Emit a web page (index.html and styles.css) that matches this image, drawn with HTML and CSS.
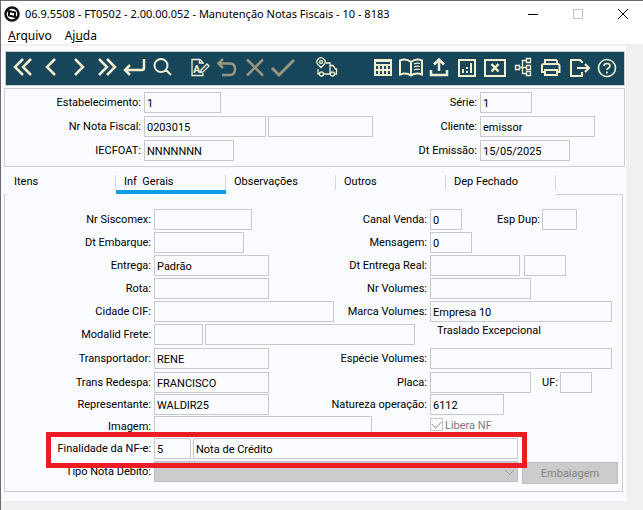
FILE: index.html
```html
<!DOCTYPE html>
<html lang="pt-BR">
  <head>
    <meta charset="UTF-8" />
    <meta name="viewport" content="width=device-width, initial-scale=1.0" />
    <title>Manutenção Notas Fiscais</title>
    <link rel="stylesheet" href="styles.css">
  </head>

  <body>
    <header class="titlebar">
      <svg class="logo" viewBox="0 0 16 16">
        <circle cx="8" cy="8" r="6.5" fill="none" stroke="#111" stroke-width="2.500" />
        <path d="M3 4.500L11 6.500V10.500M13 11.500L5 9.500V5.500" fill="none" stroke="#111" stroke-width="2" />
      </svg>
      <h1>06.9.5508 - FT0502 - 2.00.00.052 - Manutenção Notas Fiscais - 10 - 8183</h1>
      <button class="win" aria-label="Minimizar"><svg viewBox="0 0 12 12"><path d="M1 6.500H11" /></svg></button>
      <button class="win off" aria-label="Maximizar"><svg viewBox="0 0 12 12"><path d="M1.500 1.500H10.500V10.500H1.500Z" /></svg></button>
      <button class="win" aria-label="Fechar"><svg viewBox="0 0 12 12"><path d="M1 1L11 11M11 1L1 11" /></svg></button>
    </header>
    <nav class="menu">
      <a href="#"><u>A</u>rquivo</a>
      <a href="#">Aj<u>u</u>da</a>
    </nav>

    <main>
      <div class="toolbar">
        <button aria-label="Primeiro"><svg viewBox="0 0 28 28"><path d="M14 6L6 14L14 22M22 6L14 14L22 22" /></svg></button>
        <button aria-label="Anterior"><svg viewBox="0 0 28 28"><path d="M18 6L10 14L18 22" /></svg></button>
        <button aria-label="Próximo"><svg viewBox="0 0 28 28"><path d="M10 6L18 14L10 22" /></svg></button>
        <button aria-label="Último"><svg viewBox="0 0 28 28"><path d="M6 6L14 14L6 22M14 6L22 14L14 22" /></svg></button>
        <button aria-label="Vá para"><svg viewBox="0 0 28 28"><path d="M23 6V15Q23 17 21 17H4M9 12L4 17L9 22" /></svg></button>
        <button aria-label="Pesquisa"><svg viewBox="0 0 28 28"><path class="thin" d="M18.500 12.500A6.500 6.500 0 1 1 5.500 12.500A6.500 6.500 0 1 1 18.500 12.500M17 17L22 22" /></svg></button>
        <button class="gap-s" aria-label="Modifica"><svg viewBox="0 0 28 28"><path class="fine" d="M18 11V9.500L15 6.500H7V22.500H18V20M14.500 6.500V10H18M16 17L22 11L24 13L18 19L15.500 19.500Z" /><text x="8" y="20">A</text></svg></button>
        <button class="off" disabled aria-label="Desfaz"><svg viewBox="0 0 28 28"><path d="M10 6L5.500 10.500L10 15M6 10.500H17Q22 10.500 22 16Q22 22 17 22H9" /></svg></button>
        <button class="off" disabled aria-label="Cancela"><svg viewBox="0 0 28 28"><path d="M6 6.500L22 22.500M22 6.500L6 22.500" /></svg></button>
        <button class="off" disabled aria-label="Salva"><svg viewBox="0 0 28 28"><path class="bold" d="M3 15L10 22L25 7" /></svg></button>
        <button class="gap-m" aria-label="Transporte"><svg viewBox="0 0 28 28"><path class="fine" d="M8 14.500L5 11.500A4 4 0 1 1 11 11.500ZM5 16V21H6.500M10.500 21H17M13 10H17V21M17 12.500H20L22.500 16H23.500V21H21.500" /><circle class="fine" cx="8" cy="9" r="1.500" /><circle class="fine" cx="8.500" cy="21" r="2" /><circle class="fine" cx="19.500" cy="21" r="2" /></svg></button>
        <button class="gap-l" aria-label="Calendário"><svg viewBox="0 0 28 28"><path class="thin" d="M6 7H22V22H6ZM6 12H22M6 17H22M10 12V22M14 12V22M18 12V22" /><path class="thin" d="M6 8H22" /></svg></button>
        <button aria-label="Consulta"><svg viewBox="0 0 28 28"><path class="thin" d="M14 9Q9 5 3 7.500V21.500Q9 19 14 22.500Q19 19 25 21.500V7.500Q19 5 14 9V22" /><path class="fine" d="M17 11Q20 9.500 23 10.500M17 14Q20 12.500 23 13.500M17 17Q20 15.500 23 16.500" /></svg></button>
        <button aria-label="Exportar"><svg viewBox="0 0 28 28"><path d="M6 17V22H22V17M14 18V7M9 11.500L14 6.500L19 11.500" /></svg></button>
        <button aria-label="Gráfico"><svg viewBox="0 0 28 28"><path class="thin" d="M6 7H22V23H6ZM10 16V20M14 18V20M14 14V16M18 10V20" /></svg></button>
        <button aria-label="Planilha"><svg viewBox="0 0 28 28"><path class="thin" d="M4 7H24V23H4Z" /><path d="M10.500 11L17.500 18.500M17.500 11L10.500 18.500" /></svg></button>
        <button aria-label="Estrutura"><svg viewBox="0 0 28 28"><path class="fine" d="M6.500 12.500H10.500V16.500H6.500ZM17.500 5.500H21.500V9.500H17.500ZM17.500 12.500H21.500V16.500H17.500ZM17.500 18.500H21.500V22.500H17.500ZM10.500 14.500H17.500M17.500 7.500H13.500V20.500H17.500" /></svg></button>
        <button aria-label="Imprime"><svg viewBox="0 0 28 28"><path class="thin" d="M8 11V7H19L20 8V11M8 19H5V13Q5 11 7 11H20.500Q22.500 11 22.500 13V19H20M8 17H20V22H8Z" /></svg></button>
        <button aria-label="Sair"><svg viewBox="0 0 28 28"><path class="thin" d="M17 10V9L15 7H6V23H17V19M12 15H23M20 11L24 15L20 19" /></svg></button>
        <button aria-label="Ajuda"><svg viewBox="0 0 28 28"><circle class="slim" cx="14" cy="15" r="8.500" /><path class="slim" d="M11 13Q11 10.500 14 10.500Q17 10.500 17 13Q17 14 15.500 15Q14 16 14 17M14 18.500V20.500" /></svg></button>
      </div>

      <section class="panel">
        <label for="estab">Estabelecimento:</label>
        <div class="fields"><input id="estab" class="w77" value="1" readonly></div>
        <label for="serie">Série:</label>
        <div class="fields"><input id="serie" class="w52" value="1" readonly></div>

        <label for="nota">Nr Nota Fiscal:</label>
        <div class="fields"><input id="nota" class="w122" value="0203015" readonly><input class="w105" aria-label="Complemento" readonly></div>
        <label for="cliente">Cliente:</label>
        <div class="fields"><input id="cliente" class="w115" value="emissor" readonly></div>

        <label for="iecfoat">IECFOAT:</label>
        <div class="fields"><input id="iecfoat" class="w90" value="NNNNNNN" readonly></div>
        <label for="emissao">Dt Emissão:</label>
        <div class="fields"><input id="emissao" class="w90" value="15/05/2025" readonly></div>
      </section>

      <div class="tabs">
        <button><span>Itens</span></button>
        <button class="active"><span>Inf&nbsp; Gerais</span></button>
        <button><span>Observações</span></button>
        <button><span>Outros</span></button>
        <button><span>Dep Fechado</span></button>
      </div>

      <section class="pane">
        <label for="siscomex">Nr Siscomex:</label>
        <div class="fields"><input id="siscomex" class="w98" readonly></div>
        <label for="canal">Canal Venda:</label>
        <div class="fields"><input id="canal" class="w32" value="0" readonly><label for="espdup" class="esp">Esp Dup:</label><input id="espdup" class="w35" readonly></div>

        <label for="embarque">Dt Embarque:</label>
        <div class="fields"><input id="embarque" class="w90" readonly></div>
        <label for="mensagem">Mensagem:</label>
        <div class="fields"><input id="mensagem" class="w42" value="0" readonly></div>

        <label for="entrega">Entrega:</label>
        <div class="fields"><input id="entrega" class="w115" value="Padrão" readonly></div>
        <label for="real">Dt Entrega Real:</label>
        <div class="fields loose"><input id="real" class="w90" readonly><input class="w42" aria-label="Hora" readonly></div>

        <label for="rota">Rota:</label>
        <div class="fields"><input id="rota" class="w115" readonly></div>
        <label for="nrvol">Nr Volumes:</label>
        <div class="fields"><input id="nrvol" class="w101" readonly></div>

        <label for="cidade">Cidade CIF:</label>
        <div class="fields"><input id="cidade" class="w180" readonly></div>
        <label for="marca">Marca Volumes:</label>
        <div class="fields"><input id="marca" class="full" value="Empresa 10" readonly></div>

        <label for="frete">Modalid Frete:</label>
        <div class="fields span2"><input id="frete" class="w49" readonly><input class="w210" aria-label="Descrição do frete" readonly></div>
        <p class="note">Traslado Excepcional</p>

        <label for="transp">Transportador:</label>
        <div class="fields"><input id="transp" class="w115" value="RENE" readonly></div>
        <label for="especie">Espécie Volumes:</label>
        <div class="fields"><input id="especie" class="full" readonly></div>

        <label for="redespa">Trans Redespa:</label>
        <div class="fields"><input id="redespa" class="w115" value="FRANCISCO" readonly></div>
        <label for="placa">Placa:</label>
        <div class="fields"><input id="placa" class="w101" readonly><label for="uf" class="uf">UF:</label><input id="uf" class="w32" readonly></div>

        <label for="repres">Representante:</label>
        <div class="fields"><input id="repres" class="w115" value="WALDIR25" readonly></div>
        <label for="natureza">Natureza operação:</label>
        <div class="fields"><input id="natureza" class="w74" value="6112" readonly></div>

        <label for="imagem">Imagem:</label>
        <div class="fields span2"><input id="imagem" class="w218" readonly></div>
        <div class="check"><input type="checkbox" id="libera" checked disabled><label for="libera">Libera NF</label></div>

        <label for="finalidade">Finalidade da NF-e:</label>
        <div class="fields span3"><input id="finalidade" class="w37" value="5" readonly><input class="w325" aria-label="Descrição da finalidade" value="Nota de Crédito" readonly></div>

        <label for="debito">Tipo Nota Débito:</label>
        <div class="fields span3 loose">
          <select id="debito" disabled><option></option></select>
          <button class="action" disabled>Embalagem</button>
        </div>
        <div class="highlight"></div>
      </section>
    </main>
  </body>
</html>
```
FILE: styles.css
```css
* {
  margin: 0;
  padding: 0;
  box-sizing: border-box;
}

body {
  min-height: 100vh;
  background-color: #f0f0f0;
  border-top: 1px solid #6c6a6e;
  border-left: 1px solid #6c6a6e;
  font-family: Roboto, "Noto Sans", sans-serif;
  font-size: 11px;
  color: #000;
}

button,
input,
select {
  font: inherit;
  color: inherit;
}

/* window frame */
.titlebar {
  display: flex;
  align-items: center;
  height: 25px;
  padding-left: 3px;
  background-color: #fff;
}

.logo {
  width: 16px;
  height: 16px;
  margin-right: 5px;
}

.titlebar h1 {
  flex: 1;
  font-family: "Noto Sans", sans-serif;
  font-size: 11px;
  font-weight: normal;
  line-height: 24px;
  color: #000;
  white-space: nowrap;
}

.win {
  width: 45px;
  height: 24px;
  border: none;
  background: none;
}

.win:last-child {
  margin-right: -2px;
}

.win svg {
  display: block;
  width: 12px;
  height: 12px;
  margin: 0 auto;
  fill: none;
  stroke: #000;
}

.win.off svg {
  stroke: #c4c4c4;
}

.menu {
  display: flex;
  gap: 13px;
  height: 18px;
  padding-left: 7px;
  background-color: #fff;
  font-family: "Noto Sans", sans-serif;
  font-size: 12px;
  line-height: 20px;
}

.menu a {
  color: #000;
  text-decoration: none;
}

main {
  margin: 2px 17px 0 0;
  padding: 5px 1px 9px 3px;
  background-color: #f9fbfe;
}

/* toolbar */
.toolbar {
  display: flex;
  height: 35px;
  margin: 0 0 2px 1px;
  padding: 1px 0 0 3px;
  border: 1px solid #cbd0d5;
  background-color: #17465b;
}

.toolbar button {
  width: 28px;
  height: 28px;
  border: none;
  background: none;
}

.toolbar svg {
  display: block;
  width: 28px;
  height: 28px;
  fill: none;
  stroke: #f2efcf;
  stroke-width: 2.500;
}

.toolbar .thin {
  stroke-width: 2;
}

.toolbar .slim {
  stroke-width: 1.600;
}

.toolbar .fine {
  stroke-width: 1.300;
}

.toolbar .bold {
  stroke-width: 3;
}

.toolbar .off svg {
  stroke: #99967f;
}

.toolbar text {
  fill: #f2efcf;
  stroke: none;
  font-size: 11px;
  font-weight: bold;
}

.toolbar .gap-s {
  margin-left: 8px;
}

.toolbar .gap-m {
  margin-left: 16px;
}

.toolbar .gap-l {
  margin-left: 28px;
}

/* forms */
.panel,
.pane {
  display: grid;
  column-gap: 3px;
  border: 1px solid #cdcfd2;
}

.panel {
  grid-template-columns: 136px 230px 100px 1fr;
  grid-auto-rows: 24px;
  padding: 3px 0 2px;
}

.pane {
  position: relative;
  grid-template-columns: 146px 177px 93px 1fr;
  grid-template-rows: repeat(5, 23px) 24px 24px 22px 22px 22px 23px 23px;
  margin-right: 2px;
  padding: 14px 0 7px;
}

label {
  line-height: 22px;
  white-space: nowrap;
}

.panel > label,
.pane > label {
  justify-self: end;
}

.fields {
  display: flex;
  align-items: flex-start;
  gap: 2px;
}

.fields.loose {
  gap: 4px;
}

.span2 {
  grid-column: span 2;
}

.span3 {
  grid-column: span 3;
}

.fields input {
  flex: none;
  height: 21px;
  padding: 1px 2px 0;
  border: 1px solid #c8c9cb;
  background-color: #f9fbfe;
}

.fields .full {
  flex: 1;
  min-width: 0;
  margin-right: 10px;
}

.w32 { width: 32px; }
.w35 { width: 35px; }
.w37 { width: 37px; }
.w42 { width: 42px; }
.w49 { width: 49px; }
.w52 { width: 52px; }
.w74 { width: 74px; }
.w77 { width: 77px; }
.w90 { width: 90px; }
.w98 { width: 98px; }
.w101 { width: 101px; }
.w105 { width: 105px; }
.w115 { width: 115px; }
.w122 { width: 122px; }
.w180 { width: 180px; }
.w210 { width: 210px; }
.w218 { width: 218px; }
.w325 { width: 325px; }

.esp {
  width: 76px;
  text-align: right;
}

.uf {
  width: 25px;
  text-align: right;
}

.note {
  padding-left: 7px;
  line-height: 14px;
}

.check {
  display: flex;
  gap: 2px;
  color: #7b7c7e;
}

.check input {
  appearance: none;
  width: 13px;
  height: 13px;
  margin-top: 2px;
  border: 1px solid #c8c9cb;
}

.check input:checked::before {
  content: "";
  display: block;
  width: 9px;
  height: 5px;
  margin: 1px;
  border-left: 1px solid #a8a8a8;
  border-bottom: 1px solid #a8a8a8;
  transform: rotate(-45deg);
}

.check label {
  line-height: 20px;
}

select {
  appearance: none;
  width: 364px;
  height: 21px;
  border: 1px solid #bfbfbf;
  background: linear-gradient(45deg, transparent 42%, #a0a0a0 42%, #a0a0a0 58%, transparent 58%) 350px 8px / 5px 5px no-repeat,
    linear-gradient(-45deg, transparent 42%, #a0a0a0 42%, #a0a0a0 58%, transparent 58%) 354px 8px / 5px 5px no-repeat, #ccc;
}

select:disabled {
  opacity: 1;
}

.action {
  flex: 1;
  height: 22px;
  margin: 1px 4px 0 0;
  border: 1px solid #bfbfbf;
  background-color: #ccc;
  color: #838383;
}

/* tabs */
.tabs {
  display: flex;
  position: relative;
  z-index: 1;
  height: 27px;
  margin-left: 2px;
}

.tabs button {
  width: 110px;
  padding-top: 8px;
  border: none;
  border-bottom: 4px solid transparent;
  background: none;
  box-shadow: 0 1px 0 #f9fbfe;
  text-align: left;
}

.tabs span {
  display: block;
  height: 15px;
  padding-left: 8px;
  border-right: 1px solid #d5d7da;
  line-height: 14px;
}

.tabs .active {
  border-bottom-color: #0c9fe8;
}

/* frame drawn over the Finalidade row */
.highlight {
  position: absolute;
  top: 237px;
  left: 41px;
  width: 481px;
  height: 36px;
  border: 5px solid #ed1c24;
}
```
